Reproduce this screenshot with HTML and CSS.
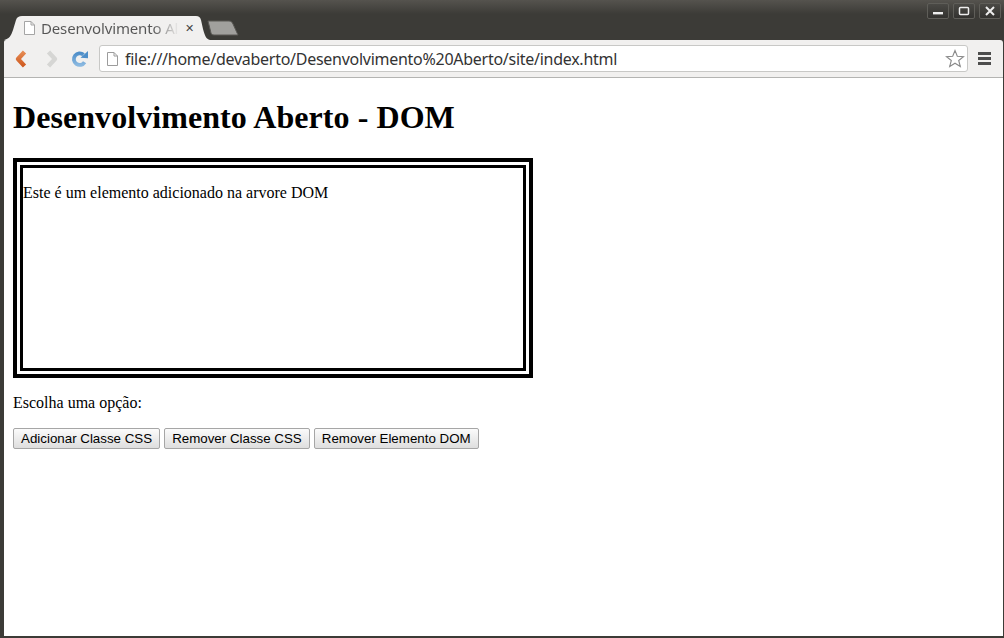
FILE: index.html
```html
<!DOCTYPE html>
<html lang="pt">
<head>
<meta charset="utf-8">
<title>Desenvolvimento Aberto</title>
<link rel="stylesheet" href="styles.css">
</head>
<body>
<div class="window">
  <header class="titlebar">
    <div class="tab">
      <svg class="tab-shape" width="206" height="25" viewBox="0 0 206 25"><path d="M0 25C5 24 7 21 9 15L12 5C13 2 15 1 18 1H192C195 1 196 2 197 5L199 14C201 21 202 24 206 25Z" fill="#f1f0ef"/></svg>
      <svg class="page-icon" width="13" height="16" viewBox="0 0 13 16"><path d="M1.500 1.500H8L11.500 5V14.500H1.500Z M8 1.500V5H11.500" fill="#fff" stroke="#a5a5a5"/></svg>
      <span class="tab-title">Desenvolvimento Al</span>
      <span class="tab-close">✕</span>
    </div>
    <svg class="new-tab" width="32" height="16" viewBox="0 0 32 16"><path d="M1 1H22C24 1 25 2 26 4L31 15H7C5 15 4.500 14 4 13Z" fill="#a1a09d" stroke="#5a5955"/></svg>
    <div class="win-controls">
      <span class="win-btn"><svg width="22" height="16" viewBox="0 0 22 16"><rect x="6" y="9" width="10" height="2.400" fill="#eee"/></svg></span>
      <span class="win-btn wide"><svg width="22" height="16" viewBox="0 0 22 16"><rect x="6.500" y="4.500" width="9" height="7" rx="1" fill="none" stroke="#eee" stroke-width="1.500"/></svg></span>
      <span class="win-btn"><svg width="22" height="16" viewBox="0 0 22 16"><path d="M7 4L15 12M15 4L7 12" stroke="#eee" stroke-width="2"/></svg></span>
    </div>
  </header>
  <nav class="toolbar">
    <svg class="tool-icon" width="14" height="18" viewBox="0 0 14 18"><defs><linearGradient id="back" x1="0" y1="0" x2="0" y2="1"><stop offset="0" stop-color="#e58a52"/><stop offset="1" stop-color="#cf5a20"/></linearGradient></defs><path d="M10.500 2L4 9L10.500 16" fill="none" stroke="url(#back)" stroke-width="4.400" stroke-linejoin="round"/></svg>
    <svg class="tool-icon forward" width="14" height="18" viewBox="0 0 14 18"><path d="M3.500 2L10 9L3.500 16" fill="none" stroke="#d6d6d4" stroke-width="4.400" stroke-linejoin="round"/></svg>
    <svg class="tool-icon reload" width="18" height="18" viewBox="0 0 18 18"><defs><linearGradient id="rel" x1="0" y1="0" x2="0" y2="1"><stop offset="0" stop-color="#4f8fc9"/><stop offset="1" stop-color="#8ab8e0"/></linearGradient></defs><path d="M13.600 12.200A5.800 5.800 0 1 1 12.500 4.800" fill="none" stroke="url(#rel)" stroke-width="3.800"/><path d="M9.500 7.800L17 8.300V1Z" fill="#4f8fc9"/></svg>
    <div class="omnibox">
      <svg width="13" height="16" viewBox="0 0 13 16"><path d="M1.500 1.500H8L11.500 5V14.500H1.500Z M8 1.500V5H11.500" fill="#fff" stroke="#9c9c9c"/></svg>
      <span class="url">file:///home/devaberto/Desenvolvimento%20Aberto/site/index.html</span>
      <svg class="star" width="20" height="19" viewBox="0 0 20 19"><path d="M10 1.500L12.300 7.200L18.500 7.600L13.700 11.500L15.300 17.500L10 14.200L4.700 17.500L6.300 11.500L1.500 7.600L7.700 7.200Z" fill="#fff" stroke="#8a8a8a" stroke-width="1.100"/></svg>
    </div>
    <div class="menu-icon"><i></i><i></i><i></i></div>
  </nav>
  <main class="page">
    <h1>Desenvolvimento Aberto - DOM</h1>
    <div class="outer-box">
      <div class="inner-box">
        <p>Este é um elemento adicionado na arvore DOM</p>
      </div>
    </div>
    <p>Escolha uma opção:</p>
    <div class="actions">
      <button type="button">Adicionar Classe CSS</button>
      <button type="button">Remover Classe CSS</button>
      <button type="button">Remover Elemento DOM</button>
    </div>
  </main>
</div>
</body>
</html>
```
FILE: styles.css
```css
* { box-sizing: border-box; }
html, body { margin: 0; height: 100%; overflow: hidden; }
body { background: #3b3a36; }
.window {
  width: 1004px;
  height: 638px;
  display: flex;
  flex-direction: column;
  padding: 0 1px 2px 4px;
  background: linear-gradient(#55534e 0, #3c3b37 14px, #3c3b37 100%);
}
.titlebar {
  height: 40px;
  flex: none;
  display: flex;
  align-items: flex-end;
  position: relative;
}
.tab {
  width: 206px;
  height: 25px;
  position: relative;
  display: flex;
  align-items: center;
  padding: 1px 0 0 19px;
  font: 15px "Noto Sans", sans-serif;
  letter-spacing: -0.15px;
  color: #555;
}
.tab-shape { position: absolute; left: 0; top: 0; }
.page-icon { position: relative; flex: none; }
.tab-title {
  position: relative;
  flex: none;
  margin-left: 5px;
  width: 138px;
  white-space: nowrap;
  background: linear-gradient(to right, #555 112px, #f1f0ef 138px);
  background-clip: text;
  -webkit-background-clip: text;
  color: transparent;
}
.tab-close {
  position: relative;
  margin-left: 6px;
  font: bold 11px "DejaVu Sans", sans-serif;
  color: #444;
}
.new-tab { margin: 0 0 4px -3px; flex: none; }
.win-controls {
  position: absolute;
  top: 3px;
  right: 2px;
  display: flex;
  gap: 4px;
}
.win-btn {
  width: 22px;
  height: 16px;
  display: block;
  border: 1px solid #5f5e59;
  border-radius: 2px;
  background: linear-gradient(#4a4945, #33322f);
}
.win-btn svg { display: block; margin: -1px; }
.toolbar {
  height: 38px;
  flex: none;
  display: flex;
  align-items: center;
  background: #f1f0ef;
  border-bottom: 1px solid #b4b4b2;
  border-radius: 2px 3px 0 0;
}
.tool-icon { flex: none; margin-left: 10px; }
.forward { margin-left: 17px; }
.reload { margin-left: 12px; }
.omnibox {
  width: 869px;
  height: 27px;
  margin-left: 10px;
  display: flex;
  align-items: center;
  padding: 0 1px 0 6px;
  background: #fff;
  border: 1px solid #c8c8c6;
  border-radius: 3px;
}
.url {
  flex: 1;
  margin-left: 6px;
  font: 16px "Noto Sans", sans-serif;
  letter-spacing: -0.27px;
  color: #333;
  white-space: nowrap;
}
.star { flex: none; margin-right: 1px; }
.menu-icon {
  margin-left: 10px;
  width: 13px;
  display: flex;
  flex-direction: column;
  gap: 2px;
}
.menu-icon i { display: block; height: 3px; background: #4d4d4d; }
.page {
  flex: 1;
  background: #fff;
  padding: 0 9px;
  font: 16px/18px "Liberation Serif", serif;
  color: #000;
}
h1 {
  margin: 21px 0 22px;
  font: bold 32px/37px "Liberation Serif", serif;
  letter-spacing: 0.07px;
}
.outer-box {
  width: 520px;
  height: 220px;
  border: 4px solid #000;
  padding: 3px;
}
.inner-box {
  height: 100%;
  border: 3px solid #000;
}
.inner-box p { margin: 16px 0; }
.page > p { margin: 16px 0; }
.actions { display: flex; gap: 4px; }
button {
  height: 21px;
  padding: 0 7px;
  font: 13.333px "Liberation Sans", sans-serif;
  color: #000;
  background: linear-gradient(#fbfbfb, #dedede);
  border: 1px solid #a6a6a6;
  border-radius: 2px;
}
```
